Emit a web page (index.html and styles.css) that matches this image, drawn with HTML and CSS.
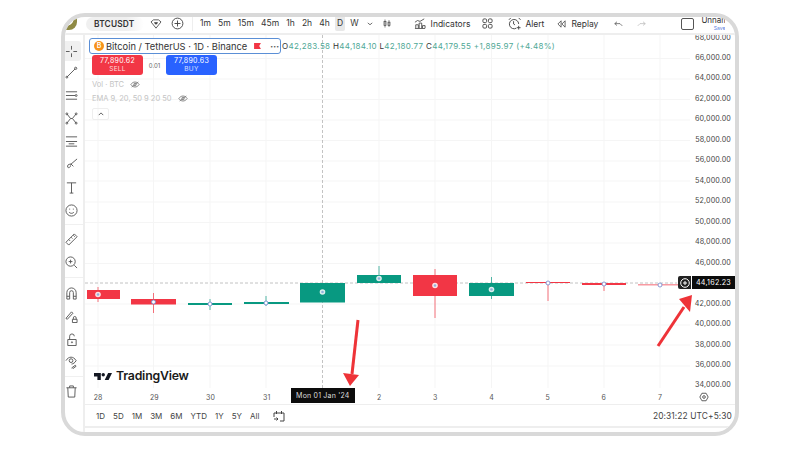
FILE: index.html
```html
<!DOCTYPE html>
<html lang="en">
<head>
<meta charset="UTF-8">
<title>BTCUSDT chart</title>
<link rel="stylesheet" href="styles.css">
</head>
<body>

<div class="frame">
  <div class="topbar">
    <div class="avatar"></div>
    <div class="symbol">BTCUSDT</div>
    <svg class="icon eye-heart" viewBox="0 0 14 12"><path d="M1 3.500 4 1h6l3 2.500-6 7.500z"/><path d="M7 7 5 5c-.6-1.500 1.500-2 2-.8.500-1.200 2.600-.7 2 .8z" class="solid"/></svg>
    <svg class="icon add-symbol" viewBox="0 0 14 14"><circle cx="7" cy="7" r="5.800"/><path d="M7 3.800v6.400M3.800 7h6.400"/></svg>
    <div class="intervals">
      <span>1m</span><span>5m</span><span>15m</span><span>45m</span><span>1h</span><span>2h</span><span>4h</span><span class="active">D</span><span>W</span>
    </div>
    <svg class="icon chevron" viewBox="0 0 8 5"><path d="M1 1l3 2.500L7 1"/></svg>
    <svg class="icon candles-btn" viewBox="0 0 12 14"><path d="M3 1v12M9 2v10"/><rect x="1.500" y="4" width="3" height="6"/><rect x="7.500" y="5" width="3" height="5"/></svg>
    <svg class="icon indicators-icon" viewBox="0 0 14 13"><path d="M1 5l3-2 3 1 5-3M1 12.500h12M2 12V8h3v4M6 12V6h3v6M10 12V9h3v3"/></svg>
    <span class="tool-label indicators-label">Indicators</span>
    <svg class="icon layouts" viewBox="0 0 12 12"><rect x="1" y="1" width="4" height="4" rx="1.200"/><rect x="7" y="1" width="4" height="4" rx="1.200"/><rect x="1" y="7" width="4" height="4" rx="1.200"/><rect x="7" y="7" width="4" height="4" rx="1.200"/></svg>
    <svg class="icon alert-icon" viewBox="0 0 15 14"><path d="M9.500 12A5 5 0 1 1 12 7.500M6.500 4.500v3l1.500 1M1.500 3 3.500 1M12 1l2 2M12 9.500v4M10 11.500h4"/></svg>
    <span class="tool-label alert-label">Alert</span>
    <svg class="icon replay-icon" viewBox="0 0 11 10"><path d="M5 1 1 5l4 4zM10 1 6 5l4 4z"/></svg>
    <span class="tool-label replay-label">Replay</span>
    <svg class="icon undo" viewBox="0 0 12 8"><path d="M4 1 1 3.500 4 6M1 3.500h7l3 3"/></svg>
    <svg class="icon redo" viewBox="0 0 12 8"><path d="M8 1l3 2.500L8 6M11 3.500H4l-3 3"/></svg>
    <div class="layout-box"></div>
    <div class="layout-name"><span>Unnamed</span><small>Save</small></div>
  </div>

  <div class="main">
    <div class="sidebar">
      <div class="tool crosshair"><svg class="icon" viewBox="0 0 14 14"><path d="M7 1v4M7 9v4M1 7h4M9 7h4"/></svg></div>
      <div class="tool"><svg class="icon" viewBox="0 0 14 14"><path d="M2 12 11 3"/><circle cx="11.500" cy="2.500" r="1.200"/><circle cx="2" cy="12" r="1"/></svg></div>
      <div class="tool"><svg class="icon" viewBox="0 0 14 14"><path d="M1 3h12M1 7h10M1 11h12"/><circle cx="12" cy="7" r="1"/></svg></div>
      <div class="tool"><svg class="icon" viewBox="0 0 14 14"><path d="M2 2l4 5-4 5M12 2 8 7l4 5M6 7h2"/><circle cx="2" cy="2" r="1"/><circle cx="12" cy="2" r="1"/><circle cx="2" cy="12" r="1"/><circle cx="12" cy="12" r="1"/></svg></div>
      <div class="tool"><svg class="icon" viewBox="0 0 14 14"><path d="M1 2h12M1 12h12M1 7h12M4 9.500h6"/></svg></div>
      <div class="tool"><svg class="icon" viewBox="0 0 14 14"><path d="M13 1 6 7c-2-1-4 1-3 3 1 1 3 0 3-2M6 6 9 9"/></svg></div>
      <div class="tool"><svg class="icon" viewBox="0 0 14 14"><path d="M2 2h10M7 2v11M5 13h4"/></svg></div>
      <div class="tool"><svg class="icon" viewBox="0 0 14 14"><circle cx="7" cy="7" r="6"/><path d="M4.500 9c1.500 1.400 3.500 1.400 5 0M5 5v1M9 5v1"/></svg></div>
      <div class="tool-sep first"></div>
      <div class="tool"><svg class="icon" viewBox="0 0 14 14"><path d="M1 10 10 1l3 3-9 9zM4 7l1.500 1.500M6.500 4.500 8 6M9 2.500l1.500 1.500"/></svg></div>
      <div class="tool"><svg class="icon" viewBox="0 0 14 14"><circle cx="6" cy="6" r="5"/><path d="M10 10l3 3M6 4v4M4 6h4"/></svg></div>
      <div class="tool-sep wide"></div>
      <div class="tool"><svg class="icon" viewBox="0 0 14 14"><path d="M2 13V6a5 5 0 0 1 10 0v7h-3V6a2 2 0 0 0-4 0v7zM2 10h3M9 10h3"/></svg></div>
      <div class="tool"><svg class="icon" viewBox="0 0 14 14"><path d="M1 9 7 2l1.500 1.500-6 6.500zM8 10h5v3.500H8zM9 10V8.500a1.500 1.500 0 0 1 3 0V10"/></svg></div>
      <div class="tool"><svg class="icon" viewBox="0 0 14 14"><path d="M3 7h9v6.500H3zM5 7V3.500a2.500 2.500 0 0 1 5 0"/><circle cx="7.500" cy="10" r=".6"/></svg></div>
      <div class="tool"><svg class="icon" viewBox="0 0 14 14"><path d="M1 5c3-5 8-5 11 0-1.500 2.500-3 3.400-5 3.700"/><circle cx="6.500" cy="5" r="2"/><path d="M7 13l4-3 1 1-4 3"/></svg></div>
      <div class="tool-sep last"></div>
      <div class="tool"><svg class="icon" viewBox="0 0 14 14"><path d="M1.500 3h11M3 3l.5 10h7l.5-10M5 3V1h4v2"/></svg></div>
    </div>

    <div class="chart">
      <div class="chart-row">
        <div class="pane">
          <svg class="canvas" viewBox="85 35 650 353">
            <g class="grid">
              <path d="M85 58.500H690M85 79H690M85 99.500H690M85 120H690M85 140.500H690M85 161H690M85 181H690M85 202H690M85 222.500H690M85 243H690M85 263.500H690M85 304H690M85 325H690M85 345H690M85 366H690"/>
              <path d="M98 35V388M153.500 35V388M210 35V388M266 35V388M379 35V388M435 35V388M491.500 35V388M548 35V388M604 35V388M660 35V388"/>
            </g>
            <path class="crossline" d="M322.500 35V388M85 283H677"/>
            <g class="down">
              <path d="M98 287V302M153.500 293V313M435 269V318M548 283V301M604 283V291"/>
              <rect x="87" y="290" width="33" height="9"/>
              <rect x="131" y="299" width="45" height="5.500"/>
              <rect x="413" y="275" width="44" height="21"/>
              <rect x="526" y="282" width="44" height="1"/>
              <rect x="582" y="283" width="44" height="2"/>
              <rect class="faint" x="638" y="284" width="44" height="1.500"/>
            </g>
            <g class="up">
              <path d="M210 299V310M266 296V306M379 266V283M491.500 277V299"/>
              <rect x="188" y="303" width="44" height="2"/>
              <rect x="244" y="302" width="45" height="2"/>
              <rect x="300" y="283" width="45" height="19.500"/>
              <rect x="357" y="275" width="44" height="8"/>
              <rect x="469" y="283" width="45" height="13"/>
            </g>
            <g class="dot">
              <circle cx="98" cy="294.500" r="2.800"/><circle cx="322.500" cy="292" r="2.800"/><circle cx="379" cy="278.500" r="2.800"/><circle cx="435" cy="285.500" r="2.800"/><circle cx="491.500" cy="289.500" r="2.800"/>
            </g>
            <g class="dot-core">
              <circle cx="98" cy="294.500" r="1.300"/><circle cx="322.500" cy="292" r="1.300"/><circle cx="379" cy="278.500" r="1.300"/><circle cx="435" cy="285.500" r="1.300"/><circle cx="491.500" cy="289.500" r="1.300"/>
            </g>
            <g class="hollow">
              <circle cx="153.500" cy="302" r="2"/><circle cx="210" cy="304" r="2"/><circle cx="266" cy="303" r="2"/><circle cx="548" cy="283" r="2"/><circle cx="604" cy="284" r="2"/><circle cx="660" cy="285" r="2"/>
            </g>
          </svg>

          <div class="legend">
            <div class="title-row">
              <div class="title-box">
                <span class="coin">B</span>
                <span class="title">Bitcoin / TetherUS · 1D · Binance</span>
                <svg class="flag" viewBox="0 0 8 7"><path d="M0 0h8L6 3.500 8 7H0z"/></svg>
                <span class="more">•••</span>
              </div>
              <div class="ohlc"><b>O</b>42,283.58 <b>H</b>44,184.10 <b>L</b>42,180.77 <b>C</b>44,179.55 +1,895.97 (+4.48%)</div>
            </div>
            <div class="trade-row">
              <div class="trade sell">77,890.62<small>SELL</small></div>
              <span class="spread">0.01</span>
              <div class="trade buy">77,890.63<small>BUY</small></div>
            </div>
            <div class="study vol">Vol · BTC
              <svg class="icon study-eye" viewBox="0 0 12 8"><path d="M1 4c2.500-4 7.500-4 10 0-2.500 4-7.500 4-10 0zM2 7l8-6"/><circle cx="6" cy="4" r="1.500"/></svg>
            </div>
            <div class="study">EMA 9, 20, 50 9 20 50
              <svg class="icon study-eye" viewBox="0 0 12 8"><path d="M1 4c2.500-4 7.500-4 10 0-2.500 4-7.500 4-10 0zM2 7l8-6"/><circle cx="6" cy="4" r="1.500"/></svg>
            </div>
            <div class="collapse"><svg class="icon" viewBox="0 0 8 5"><path d="M1 4l3-3 3 3"/></svg></div>
          </div>

          <div class="watermark">
            <svg viewBox="0 3 37 14"><path d="M0 3h14v14H7V10H0zM29 3h8l-7 14h-8z"/><circle cx="19" cy="6.500" r="3.500"/></svg>
            <span>TradingView</span>
          </div>
        </div>

        <div class="price-axis">
          <span>68,000.00</span><span>66,000.00</span><span>64,000.00</span><span>62,000.00</span><span>60,000.00</span><span>58,000.00</span><span>56,000.00</span><span>54,000.00</span><span>52,000.00</span><span>50,000.00</span><span>48,000.00</span><span>46,000.00</span><span class="skip">44,000.00</span><span>42,000.00</span><span>40,000.00</span><span>38,000.00</span><span>36,000.00</span><span>34,000.00</span>
          <div class="price-tag">
            <div class="tag-plus"><svg class="icon" viewBox="0 0 10 10"><circle cx="5" cy="5" r="4.300"/><path d="M5 3v4M3 5h4"/></svg></div>
            <div class="tag-value">44,162.23</div>
          </div>
        </div>
      </div>

      <div class="time-axis">
        <div class="ticks">
          <span>28</span><span>29</span><span>30</span><span>31</span><span><b class="date-tag">Mon 01 Jan '24</b></span><span>2</span><span>3</span><span>4</span><span>5</span><span>6</span><span>7</span>
        </div>
        <svg class="icon axis-gear" viewBox="0 0 12 12"><path d="M3.500 1.500h5L11 6l-2.500 4.500h-5L1 6z"/><circle cx="6" cy="6" r="1.600"/></svg>
      </div>

      <div class="bottombar">
        <div class="ranges">
          <span>1D</span><span>5D</span><span>1M</span><span>3M</span><span>6M</span><span>YTD</span><span>1Y</span><span>5Y</span><span>All</span>
        </div>
        <svg class="icon goto" viewBox="0 0 12 12"><path d="M1 3h10v8H7M1 3v4M3.500 1v3M8.500 1v3M1 9h4M3.500 7.500 5 9l-1.500 1.500"/></svg>
        <div class="clock">20:31:22 UTC+5:30</div>
      </div>
    </div>
  </div>

  <svg class="arrows" viewBox="65 17 670 415">
    <path d="M358 320 352 374"/>
    <path class="head" d="M343 373 359 375 350 386z"/>
    <path d="M658 346 684 307"/>
    <path class="head" d="M679 299 692 295 690 312z"/>
  </svg>
</div>

</body>
</html>
```

FILE: styles.css
```css
* { box-sizing: border-box; }

body {
  margin: 0;
  width: 800px;
  height: 450px;
  padding: 13px 61px 14px;
  background: #fff;
  font-family: Inter, "Liberation Sans", sans-serif;
  color: #333;
  overflow: hidden;
}

.icon { fill: none; stroke: #444; stroke-width: 1; flex-shrink: 0; display: block; }

.frame {
  position: relative;
  height: 423px;
  border: 4px solid #d9d9d9;
  border-radius: 24px;
  overflow: hidden;
  background: #fff;
  display: flex;
  flex-direction: column;
}

/* top toolbar */
.topbar {
  height: 18px;
  flex-shrink: 0;
  display: flex;
  align-items: center;
  padding-bottom: 3px;
  border-bottom: 2px solid #eee;
  font-size: 8.500px;
}
.avatar {
  width: 12px;
  height: 13px;
  margin-top: -1px;
  border-radius: 0 0 8px 0;
  background: radial-gradient(circle at 2px 2px, #fff 6px, #8f8a45 7px);
}
.symbol {
  margin-left: 9px;
  width: 58px;
  height: 14px;
  line-height: 14px;
  padding-left: 8px;
  background: linear-gradient(to right, #f0f0f0 70%, #fff);
  border-radius: 7px;
  font-weight: 600;
  font-size: 8.300px;
  letter-spacing: .2px;
}
.eye-heart { width: 12px; height: 10px; margin-left: 6px; }
.eye-heart .solid { fill: #444; stroke: none; }
.add-symbol { width: 13px; height: 13px; margin-left: 9px; }
.intervals {
  display: flex;
  align-items: center;
  margin-left: 8px;
  height: 15px;
  border-left: 1px solid #eee;
  padding-left: 7px;
  gap: 7.150px;
}
.intervals span { line-height: 15px; }
.intervals .active { background: #e8e8e8; border-radius: 2px; padding: 0 2px; margin: 0 -2px; }
.chevron { width: 6px; height: 4px; margin-left: 8px; }
.candles-btn { width: 8px; height: 11px; margin-left: 10px; }
.indicators-icon { width: 12px; height: 11px; margin-left: 23px; }
.tool-label { margin-left: 5px; }
.layouts { width: 11px; height: 11px; margin-left: 12px; }
.alert-icon { width: 15px; height: 13px; margin-left: 14px; }
.alert-label { margin-left: 3px; }
.replay-icon { width: 9px; height: 8px; margin-left: 13px; }
.replay-label { margin-left: 5px; }
.undo { width: 9px; height: 6px; margin-left: 16px; stroke: #555; }
.redo { width: 9px; height: 6px; margin-left: 14px; stroke: #bbb; }
.layout-box { width: 13px; height: 12px; margin-left: 35px; border: 1px solid #555; border-radius: 2px; }
.layout-name {
  margin-left: 7px;
  width: 24px;
  overflow: hidden;
  display: flex;
  flex-direction: column;
  align-items: flex-end;
  line-height: 9px;
  white-space: nowrap;
  font-size: 8px;
}
.layout-name span { align-self: flex-start; }
.layout-name small { font-size: 5px; line-height: 6px; color: #5b7fe0; }

.main { flex: 1; display: flex; min-height: 0; }

/* drawing tools */
.sidebar {
  width: 20px;
  flex-shrink: 0;
  border-right: 2px solid #eee;
  display: flex;
  flex-direction: column;
  align-items: center;
  overflow: hidden;
  padding-top: 6px;
}
.tool {
  width: 19px;
  height: 23px;
  flex-shrink: 0;
  display: flex;
  align-items: center;
  justify-content: center;
  margin-left: -6px;
}
.tool .icon { width: 13px; height: 13px; stroke: #555; }
.crosshair { background: #f0f0f0; border-radius: 3px; height: 20px; }
.tool-sep { flex-shrink: 0; width: 100%; border-bottom: 1px solid #f0f0f0; }
.tool-sep.first { height: 3px; margin-bottom: 2.500px; }
.tool-sep.wide { height: 4px; margin-bottom: 4px; }
.tool-sep.last { height: 3px; margin-bottom: 3px; }

/* chart */
.chart { flex: 1; min-width: 0; display: flex; flex-direction: column; }
.chart-row { height: 353px; flex-shrink: 0; display: flex; overflow: hidden; }
.pane { position: relative; flex: 1; min-width: 0; }
.canvas { position: absolute; left: 0; top: 0; width: 650px; height: 353px; }
.grid path { fill: none; stroke: #f5f5f5; stroke-width: 1; }
.crossline { fill: none; stroke: #aaa; stroke-width: 1; stroke-dasharray: 3 2; opacity: .7; }
.down { fill: #f23645; stroke: #f23645; stroke-width: 0; }
.down path { stroke-width: 1; fill: none; opacity: .7; }
.down .faint { opacity: .5; }
.up { fill: #089981; stroke: #089981; stroke-width: 0; }
.up path { stroke-width: 1; fill: none; opacity: .7; }
.dot { fill: #fff; opacity: .85; }
.dot-core { fill: #8fb2dc; }
.hollow { fill: #fff; stroke: #7a8fd0; stroke-width: .9; }

.legend { position: relative; padding: 3px 0 0 4px; }
.title-row { display: flex; align-items: center; height: 16px; }
.title-box {
  width: 192px;
  height: 16px;
  border: 1px solid #5b8fd6;
  border-radius: 3px;
  background: #fff;
  display: flex;
  align-items: center;
  padding-left: 4px;
  font-size: 9.300px;
  white-space: nowrap;
}
.coin {
  width: 10px;
  height: 10px;
  line-height: 10px;
  flex-shrink: 0;
  border-radius: 50%;
  background: #f7931a;
  color: #fff;
  font-size: 7px;
  font-weight: 600;
  text-align: center;
}
.title { margin-left: 2px; }
.flag { width: 7px; height: 6px; margin-left: 7px; fill: #f23645; flex-shrink: 0; }
.more { margin-left: 9px; font-size: 5px; letter-spacing: .2px; color: #555; }
.ohlc { font-size: 8px; color: #4fa896; letter-spacing: .33px; white-space: pre; margin-left: 1px; }
.ohlc b { font-weight: 400; color: #333; }

.trade-row { display: flex; align-items: center; margin: 1px 0 0 3px; }
.trade {
  width: 51px;
  height: 20px;
  border-radius: 3px;
  color: #fff;
  font-size: 7px;
  letter-spacing: .3px;
  text-align: center;
  line-height: 9px;
  padding-top: 1px;
}
.trade small { display: block; font-size: 6.500px; opacity: .8; line-height: 9px; }
.sell { background: #f23645; }
.buy { background: #2962ff; }
.spread { width: 23px; text-align: center; font-size: 6px; color: #666; }
.study {
  display: flex;
  align-items: center;
  gap: 6px;
  height: 14px;
  margin-left: 3px;
  font-size: 7.500px;
  color: #c4c4c4;
  white-space: nowrap;
}
.vol { margin-top: 2px; }
.study-eye { width: 10px; height: 7px; stroke: #777; }
.collapse {
  width: 17px;
  height: 12px;
  margin: 3px 0 0 3px;
  border: 1px solid #eee;
  border-radius: 2px;
  display: flex;
  align-items: center;
  justify-content: center;
}
.collapse .icon { width: 6px; height: 4px; stroke: #333; }

.watermark {
  position: absolute;
  left: 9px;
  top: 333px;
  display: flex;
  align-items: center;
  gap: 4px;
  color: #1a1a1a;
  font-size: 12.300px;
  font-weight: 600;
  letter-spacing: -.2px;
  line-height: 16px;
}
.watermark svg { width: 18px; height: 9px; fill: #131722; }

.price-axis {
  position: relative;
  width: 45px;
  flex-shrink: 0;
  display: flex;
  flex-direction: column;
  align-items: flex-end;
  padding-right: 4px;
  margin-top: -7.500px;
  font-size: 7.200px;
  letter-spacing: .1px;
  color: #444;
}
.price-axis span { height: 20.480px; line-height: 20.480px; flex-shrink: 0; }
.price-axis .skip { visibility: hidden; }
.price-tag {
  position: absolute;
  right: 0;
  top: 248.500px;
  display: flex;
  gap: 1px;
  height: 13px;
}
.tag-plus {
  width: 13px;
  background: #222;
  border-radius: 2px 0 0 2px;
  display: flex;
  align-items: center;
  justify-content: center;
}
.tag-plus .icon { width: 10px; height: 10px; stroke: #fff; }
.tag-value {
  width: 43px;
  background: #0c0c0c;
  color: #fff;
  text-align: center;
  line-height: 13px;
  letter-spacing: .2px;
  white-space: nowrap;
}

.time-axis { height: 17px; flex-shrink: 0; display: flex; border-bottom: 1px solid #eee; font-size: 7px; color: #555; }
.ticks { display: flex; margin-left: -15px; width: 635px; }
.ticks span {
  width: 56.200px;
  flex-shrink: 0;
  display: flex;
  justify-content: center;
  line-height: 19px;
}
.date-tag {
  flex-shrink: 0;
  width: 64px;
  height: 15px;
  line-height: 15px;
  background: #0c0c0c;
  color: #ddd;
  font-weight: 400;
  text-align: center;
  font-size: 7px;
  letter-spacing: .2px;
  white-space: nowrap;
}
.axis-gear { width: 10px; height: 10px; margin: 4px 0 0 -6px; }

.bottombar {
  height: 23px;
  flex-shrink: 0;
  display: flex;
  align-items: center;
  border-bottom: 2px solid #eee;
  font-size: 8px;
  color: #444;
  padding-left: 11px;
}
.ranges { display: flex; gap: 8px; }
.goto { width: 12px; height: 12px; margin-left: 14px; }
.clock { margin-left: auto; padding-right: 3px; font-size: 8.400px; letter-spacing: .1px; }

.arrows {
  position: absolute;
  left: 0;
  top: 0;
  width: 670px;
  height: 415px;
  fill: none;
  stroke: #ee3338;
  stroke-width: 3;
}
.arrows .head { fill: #ee3338; stroke: none; }
```
